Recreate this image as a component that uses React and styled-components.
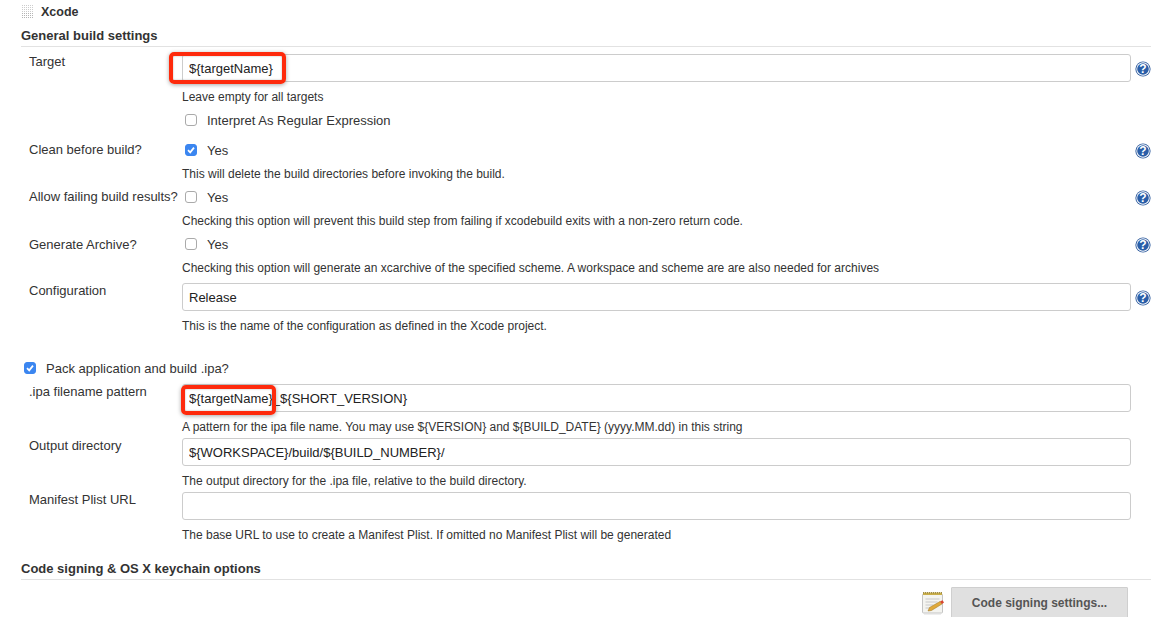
import React from "react";
import styled, { createGlobalStyle } from "styled-components";

const Global = createGlobalStyle`
  html, body { margin: 0; padding: 0; background: #fff; }
  body { font-family: "Liberation Sans", Arial, sans-serif; font-size: 12.5px; color: #333; }
`;

const Page = styled.div`
  width: 1176px;
  height: 617px;
  overflow: hidden;
  padding-left: 21px;
  box-sizing: border-box;
  position: relative;
`;
const TitleBar = styled.div`
  display: flex;
  align-items: center;
  height: 23px;
  gap: 7px;
  padding-left: 1px;
  font-weight: bold;
  font-size: 12.5px;
  color: #333;
`;
const Heading = styled.div`
  width: 1130px;
  box-sizing: border-box;
  font-weight: bold;
  font-size: 13px;
  color: #333;
  height: ${(p) => p.$h}px;
  margin-top: ${(p) => p.$top || 0}px;
  line-height: ${(p) => p.$lh}px;
  border-bottom: 1px solid #e2e2e2;
`;
const Row = styled.div`
  display: grid;
  grid-template-columns: 153px 949px 20px;
  margin-top: ${(p) => p.$top || 0}px;
  margin-left: 8px;
  align-items: start;
`;
const Label = styled.div`
  font-size: 13px;
  line-height: 15px;
  padding-top: ${(p) => p.$pad || 0}px;
  color: #333;
  white-space: nowrap;
`;
const Field = styled.div`
  position: relative;
  height: 28px;
`;
const TextInput = styled.input`
  display: block;
  width: 100%;
  height: 28px;
  box-sizing: border-box;
  border: 1px solid #ccc;
  border-radius: 3px;
  padding: 0 6px;
  font: 13px "Liberation Sans", Arial, sans-serif;
  color: #222;
  background: #fff;
  outline: none;
`;
const Hint = styled.div`
  font-size: 12px;
  line-height: 16px;
  height: 16px;
  color: #333;
  white-space: nowrap;
`;
const CheckLine = styled.div`
  display: flex;
  align-items: center;
  height: 16px;
  gap: 10px;
  margin-left: ${(p) => p.$off}px;
  font-size: 13px;
  color: #333;
  white-space: nowrap;
`;
const Box = styled.span`
  width: 12px;
  height: 12px;
  box-sizing: border-box;
  border-radius: 3px;
  flex: none;
  display: flex;
  align-items: center;
  justify-content: center;
  background: ${(p) => (p.$on ? "#3b86f0" : "#fff")};
  border: 1px solid ${(p) => (p.$on ? "#3b86f0" : "#aaa")};
`;
const HelpSlot = styled.div`
  box-sizing: border-box;
  padding: ${(p) => p.$pad || 0}px 0 0 4px;
  height: 16px;
`;
const Highlight = styled.div`
  position: absolute;
  box-sizing: border-box;
  left: ${(p) => p.$l}px;
  top: ${(p) => p.$t}px;
  width: ${(p) => p.$w}px;
  height: ${(p) => p.$h}px;
  border: 4px solid #fe2a0c;
  border-radius: 5px;
  box-shadow: 0 1px 4px rgba(0, 0, 0, 0.35), inset 0 0 2px rgba(0, 0, 0, 0.3);
  pointer-events: none;
`;
const Footer = styled.div`
  display: flex;
  align-items: flex-start;
  gap: 6px;
  width: 1107px;
  justify-content: flex-end;
  margin-top: 7px;
`;
const NoteSlot = styled.div`
  padding-top: 4px;
  height: 24px;
`;
const Button = styled.button`
  width: 177px;
  height: 32px;
  box-sizing: border-box;
  background: #e0e0e0;
  border: 1px solid #cfcfcf;
  border-radius: 1px;
  font: bold 12px "Liberation Sans", Arial, sans-serif;
  color: #555;
  padding: 0;
`;

const Grip = () => (
  <svg width="12" height="14" viewBox="0 0 12 14">
    {Array.from({ length: 7 }).flatMap((_, r) =>
      Array.from({ length: 6 }).map((_, c) => (
        <rect key={r + "-" + c} x={c * 2} y={r * 2} width="1" height="1" fill={r > 3 ? "#b4b4b4" : "#cdcdcd"} />
      ))
    )}
  </svg>
);
const Tick = () => (
  <svg width="10" height="10" viewBox="0 0 10 10">
    <path d="M2 5.2 L4.2 7.4 L8 2.6" fill="none" stroke="#fff" strokeWidth="1.7" />
  </svg>
);
const Help = () => (
  <svg width="16" height="16" viewBox="0 0 16 16">
    <circle cx="8" cy="8" r="7.6" fill="#2f5c9e" />
    <circle cx="8" cy="8" r="6.7" fill="#fff" />
    <circle cx="8" cy="8" r="5.8" fill="#2a5ea8" />
    <text x="8" y="12.2" textAnchor="middle" fontSize="12" fontWeight="bold" fontFamily="Liberation Sans" fill="#fff">?</text>
  </svg>
);
const Notepad = () => (
  <svg width="24" height="24" viewBox="0 0 24 24">
    <rect x="1.5" y="3" width="20" height="19" rx="1" fill="#f4f4f0" stroke="#c4c4c4" />
    <rect x="2" y="1.5" width="19" height="2.5" fill="#c9ae4a" />
    <path d="M2 1.8h19" stroke="#7d6c2c" strokeDasharray="1 1" />
    <path d="M4.5 8h14M4.5 11h12M4.5 14h8M4.5 17h5" stroke="#c8c8c8" />
    <path d="M7 20 L8.5 16.5 L19 10.5 L21 13 L10.5 19.5 Z" fill="#e0a93a" stroke="#9c7420" strokeWidth=".5" />
    <path d="M19 10.5 L21 13 L23 11.5 L21.5 9.2 Z" fill="#d8452e" />
    <path d="M3 23h17" stroke="#ddd" />
  </svg>
);

const Check = ({ on, children, off = 3 }) => (
  <CheckLine $off={off}>
    <Box $on={on}>{on && <Tick />}</Box>
    {children}
  </CheckLine>
);

const HintRow = ({ top, children }) => (
  <Row $top={top}>
    <span />
    <Hint>{children}</Hint>
  </Row>
);

export default function App() {
  return (
    <Page>
      <Global />
      <TitleBar>
        <Grip />
        Xcode
      </TitleBar>
      <Heading $h={24} $lh={26}>General build settings</Heading>

      <Row $top={7}>
        <Label>Target</Label>
        <Field>
          <TextInput readOnly value="${targetName}" />
        </Field>
        <HelpSlot $pad={7}><Help /></HelpSlot>
      </Row>
      <HintRow top={7}>Leave empty for all targets</HintRow>
      <Row $top={7}>
        <span />
        <Check>Interpret As Regular Expression</Check>
      </Row>

      <Row $top={14}>
        <Label>Clean before build?</Label>
        <Check on>Yes</Check>
        <HelpSlot $pad={1}><Help /></HelpSlot>
      </Row>
      <HintRow top={8}>This will delete the build directories before invoking the build.</HintRow>

      <Row $top={7}>
        <Label>Allow failing build results?</Label>
        <Check>Yes</Check>
        <HelpSlot $pad={1}><Help /></HelpSlot>
      </Row>
      <HintRow top={8}>Checking this option will prevent this build step from failing if xcodebuild exits with a non-zero return code.</HintRow>

      <Row $top={7}>
        <Label $pad={1}>Generate Archive?</Label>
        <Check>Yes</Check>
        <HelpSlot $pad={1}><Help /></HelpSlot>
      </Row>
      <HintRow top={8}>Checking this option will generate an xcarchive of the specified scheme. A workspace and scheme are are also needed for archives</HintRow>

      <Row $top={7}>
        <Label>Configuration</Label>
        <Field>
          <TextInput readOnly value="Release" />
        </Field>
        <HelpSlot $pad={7}><Help /></HelpSlot>
      </Row>
      <HintRow top={7}>This is the name of the configuration as defined in the Xcode project.</HintRow>

      <Row $top={26}>
        <Check on off={-5}>Pack application and build .ipa?</Check>
      </Row>

      <Row $top={8}>
        <Label>.ipa filename pattern</Label>
        <Field>
          <TextInput readOnly value="${targetName}_${SHORT_VERSION}" />
        </Field>
      </Row>
      <HintRow top={7}>{"A pattern for the ipa file name. You may use ${VERSION} and ${BUILD_DATE} (yyyy.MM.dd) in this string"}</HintRow>

      <Row $top={3}>
        <Label>Output directory</Label>
        <Field>
          <TextInput readOnly value="${WORKSPACE}/build/${BUILD_NUMBER}/" />
        </Field>
      </Row>
      <HintRow top={7}>The output directory for the .ipa file, relative to the build directory.</HintRow>

      <Row $top={3}>
        <Label>Manifest Plist URL</Label>
        <Field>
          <TextInput readOnly value="" />
        </Field>
      </Row>
      <HintRow top={7}>The base URL to use to create a Manifest Plist. If omitted no Manifest Plist will be generated</HintRow>

      <Heading $top={18} $h={19} $lh={16}>Code signing &amp; OS X keychain options</Heading>
      <Footer>
        <NoteSlot><Notepad /></NoteSlot>
        <Button>Code signing settings...</Button>
      </Footer>

      <Highlight $l={169} $t={52} $w={117} $h={32} />
      <Highlight $l={181} $t={385} $w={95} $h={30} />
    </Page>
  );
}
